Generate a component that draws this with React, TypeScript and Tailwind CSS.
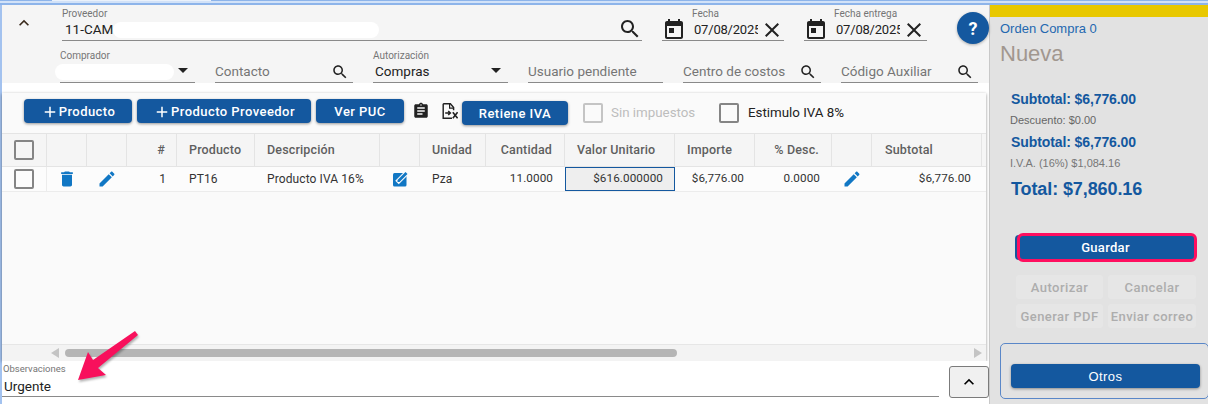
import React from "react";

const P = {
  search: "M15.5 14h-.79l-.28-.27C15.41 12.59 16 11.11 16 9.5 16 5.91 13.09 3 9.5 3S3 5.91 3 9.5 5.91 16 9.5 16c1.61 0 3.09-.59 4.23-1.57l.27.28v.79l5 4.99L20.49 19l-4.99-5zm-6 0C7.01 14 5 11.99 5 9.5S7.01 5 9.5 5 14 7.01 14 9.5 11.99 14 9.5 14z",
  today: "M19 3h-1V1h-2v2H8V1H6v2H5c-1.11 0-1.99.9-1.99 2L3 19c0 1.1.89 2 2 2h14c1.1 0 2-.9 2-2V5c0-1.1-.9-2-2-2zm0 16H5V8h14v11zM7 10h5v5H7z",
  close: "M19 6.41L17.59 5 12 10.59 6.41 5 5 6.41 10.59 12 5 17.59 6.41 19 12 13.41 17.59 19 19 17.59 13.41 12z",
  less: "M12 8l-6 6 1.41 1.41L12 10.83l4.59 4.58L18 14z",
  drop: "M7 10l5 5 5-5z",
  del: "M6 19c0 1.1.9 2 2 2h8c1.1 0 2-.9 2-2V7H6v12zM19 4h-3.5l-1-1h-5l-1 1H5v2h14V4z",
  edit: "M3 17.25V21h3.75L17.81 9.94l-3.75-3.75L3 17.25zM20.71 7.04c.39-.39.39-1.02 0-1.41l-2.34-2.34c-.39-.39-1.02-.39-1.41 0l-1.83 1.83 3.75 3.75 1.83-1.83z",
  add: "M19 13h-6v6h-2v-6H5v-2h6V5h2v6h6v2z",
  clip: "M19 3h-4.18C14.4 1.84 13.3 1 12 1c-1.3 0-2.4.84-2.82 2H5c-1.1 0-2 .9-2 2v14c0 1.1.9 2 2 2h14c1.1 0 2-.9 2-2V5c0-1.1-.9-2-2-2zm-7 0c.55 0 1 .45 1 1s-.45 1-1 1-1-.45-1-1 .45-1 1-1zm2 14H7v-2h7v2zm3-4H7v-2h10v2zm0-4H7V7h10v2z",
};

function Icon({ d, className }: { d: string; className: string }) {
  return (
    <svg viewBox="0 0 24 24" fill="currentColor" className={className}>
      <path d={d} />
    </svg>
  );
}

function Field({
  label,
  value,
  placeholder,
  icon,
  className,
}: {
  label?: string;
  value?: string;
  placeholder?: string;
  icon?: React.ReactNode;
  className: string;
}) {
  return (
    <div className={`relative flex flex-col justify-end border-b border-[#8a8a8a] ${className}`}>
      {label && <span className="absolute left-0 top-[3px] text-[10px] leading-[12px] text-[#757575]">{label}</span>}
      <div className="flex h-[21px] items-center justify-between">
        <span className={`text-[13.5px] ${value ? "text-[#222]" : "text-[#757575]"}`}>{value || placeholder}</span>
        {icon}
      </div>
    </div>
  );
}

function BlueButton({ children, className }: { children: React.ReactNode; className: string }) {
  return (
    <button className={`flex h-6 items-center justify-center rounded-[4px] bg-[#14589f] pt-[1px] text-[13px] font-medium tracking-[0.45px] text-white shadow-[0_1px_3px_rgba(0,0,0,0.4)] ${className}`}>
      {children}
    </button>
  );
}

function Check({ disabled }: { disabled?: boolean }) {
  return <span className={`block h-5 w-5 rounded-[2px] border-2 ${disabled ? "border-[#c4c4c4]" : "border-[#858585]"}`} />;
}

function DateField({ label, className }: { label: string; className: string }) {
  return (
    <div className={`relative flex h-[36px] items-end border-b border-[#8a8a8a] ${className}`}>
      <span className="absolute left-[30px] top-[3px] text-[10px] leading-[12px] text-[#757575]">{label}</span>
      <Icon d={P.today} className="mb-[-2px] h-[24px] w-[24px] shrink-0 text-[#222]" />
      <span className="ml-[8px] w-[64px] overflow-hidden whitespace-nowrap pb-[1px] text-[13px] leading-[18px] tracking-[-0.2px] text-[#222]">07/08/2025</span>
      <Icon d={P.close} className="mb-[-2px] ml-[2px] h-[24px] w-[24px] shrink-0 text-[#222]" />
    </div>
  );
}

function Col({ children, align, className = "" }: { children?: React.ReactNode; align?: string; className?: string }) {
  return <div className={`flex items-center border-r border-[#e4e4e4] ${align || "justify-center"} ${className}`}>{children}</div>;
}

const gridCols = "grid-cols-[45px_40px_40px_50px_78px_125px_40px_66px_79px_110px_80px_77px_40px_110px_1fr]";

function SideDisabled({ children }: { children: React.ReactNode }) {
  return <div className="flex h-6 items-center justify-center rounded-[3px] bg-[#e6e6e6] pt-[1px] font-[Roboto] text-[13px] font-medium tracking-[0.45px] text-[#adadad]">{children}</div>;
}

export default function App() {
  return (
    <div className="relative flex h-[404px] w-[1208px] flex-col overflow-hidden bg-white font-[Roboto,sans-serif] text-[#222]">
      <div className="h-[5px] shrink-0 bg-[#d2e2f8]">
        <div className="flex h-[1px]">
          <span className="w-[52px] bg-[#8db4ea]" />
          <span className="w-[159px] bg-[#eaf1fb]" />
          <span className="flex-1 bg-[#8db4ea]" />
        </div>
        <div className="mt-[2px] h-[2px] bg-[#8db4ea]" />
      </div>
      <div className="flex min-h-0 flex-1">
        <div className="w-[2px] shrink-0 bg-[#a3c2ef]" />
        {/* main */}
        <div className="flex w-[987px] shrink-0 flex-col">
          <div className="relative h-[78px] shrink-0 bg-[#f5f5f5]">
            <div className="flex h-[39px] items-start">
              <Icon d={P.less} className="ml-[12px] mt-[8px] h-[20px] w-[20px] text-[#3a2a1c]" />
              <Field label="Proveedor" value="11-CAM" className="ml-[28px] h-[36px] w-[580px] pl-[3px]"
                icon={<Icon d={P.search} className="mb-[1px] h-[24px] w-[24px] shrink-0 text-[#222]" />} />
              <DateField label="Fecha" className="ml-[20px] w-[122px]" />
              <DateField label="Fecha entrega" className="ml-[20px] w-[123px]" />
              <span className="ml-[30px] mt-[7px] flex h-8 w-8 items-center justify-center rounded-full bg-[#14589f] text-[18px] font-bold text-white shadow-[0_1px_3px_rgba(0,0,0,0.3)]">?</span>
            </div>
            <div className="flex items-start pl-[58px]">
              <div className="relative flex h-[39px] w-[135px] items-end justify-end border-b border-[#8a8a8a]">
                <span className="absolute left-0 top-[6px] text-[10px] leading-[12px] text-[#757575]">Comprador</span>
                <Icon d={P.drop} className="h-[24px] w-[24px] text-[#222]" />
              </div>
              <Field placeholder="Contacto" className="ml-[20px] mt-[2px] h-[37px] w-[138px]" icon={<Icon d={P.search} className="mr-[4px] h-[18px] w-[18px] text-[#222]" />} />
              <div className="relative ml-[20px] flex h-[39px] w-[135px] items-end justify-between border-b border-[#8a8a8a] pl-[2px]">
                <span className="absolute left-0 top-[6px] text-[10px] leading-[12px] text-[#757575]">Autorización</span>
                <span className="pb-[1px] text-[13.5px] leading-[20px] text-[#222]">Compras</span>
                <Icon d={P.drop} className="h-[24px] w-[24px] text-[#222]" />
              </div>
              <Field placeholder="Usuario pendiente" className="ml-[20px] mt-[2px] h-[37px] w-[135px]" />
              <Field placeholder="Centro de costos" className="ml-[20px] mt-[2px] h-[37px] w-[138px]" icon={<Icon d={P.search} className="mr-[4px] h-[18px] w-[18px] text-[#222]" />} />
              <Field placeholder="Código Auxiliar" className="ml-[20px] mt-[2px] h-[37px] w-[137px]" icon={<Icon d={P.search} className="mr-[4px] h-[18px] w-[18px] text-[#222]" />} />
            </div>
            {/* redaction blobs */}
            <span className="absolute left-[111px] top-[17px] h-[16px] w-[266px] rounded-full bg-white" />
            <span className="absolute left-[53px] top-[59px] h-[16px] w-[119px] rounded-full bg-white" />
          </div>
          <div className="h-[10px] shrink-0 bg-white" />
          {/* card */}
          <div className="flex h-[268px] w-[984px] shrink-0 flex-col bg-[#fafafa] shadow-[0_1px_3px_rgba(0,0,0,0.45)]">
            <div className="flex h-[40px] shrink-0 items-start pl-[22px] pt-[6px]">
              <BlueButton className="w-[108px]"><Icon d={P.add} className="h-[18px] w-[18px]" />Producto</BlueButton>
              <BlueButton className="ml-[5px] w-[174px]"><Icon d={P.add} className="h-[18px] w-[18px]" />Producto Proveedor</BlueButton>
              <BlueButton className="ml-[5px] w-[88px]">Ver PUC</BlueButton>
              <Icon d={P.clip} className="ml-[8px] mt-[3px] h-[18px] w-[18px] text-[#222]" />
              <svg viewBox="0 0 20 20" className="ml-[12px] mt-[4px] h-[16px] w-[16px] text-[#222]" fill="none" stroke="currentColor">
                <path d="M1.500 1h9l4 4.500V9M1.500 1v18h11" strokeWidth="1.8" />
                <path d="M9.500 1v5.500h5" strokeWidth="1.500" />
                <path d="M4 12.500h6M7.800 10l2.700 2.500L7.800 15" strokeWidth="1.800" />
                <path d="M13.500 11.500l6 7.500M19.500 11.500l-6 7.500" strokeWidth="2" />
              </svg>
              <BlueButton className="ml-[4px] mt-[2px] w-[106px]">Retiene IVA</BlueButton>
              <span className="ml-[15px] mt-[4px]"><Check disabled /></span>
              <span className="ml-[8px] mt-[4px] w-[108px] text-[13.33px] leading-[20px] text-[#bdbdbd]">Sin impuestos</span>
              <span className="mt-[4px]"><Check /></span>
              <span className="ml-[9px] mt-[4px] text-[13.33px] leading-[20px] text-[#222]">Estimulo IVA 8%</span>
            </div>
            {/* table head */}
            <div className={`grid h-[34px] shrink-0 border-y border-[#e4e4e4] bg-[#f5f5f5] text-[12.5px] font-medium tracking-[0.15px] text-[#5f5f5f] ${gridCols}`}>
              <Col><Check /></Col>
              <Col />
              <Col />
              <Col align="justify-end" className="pr-[11px]">#</Col>
              <Col align="justify-start" className="pl-[12px]">Producto</Col>
              <Col align="justify-start" className="pl-[12px]">Descripción</Col>
              <Col />
              <Col align="justify-start" className="pl-[12px]">Unidad</Col>
              <Col align="justify-end" className="pr-[12px]">Cantidad</Col>
              <Col align="justify-start" className="pl-[12px]">Valor Unitario</Col>
              <Col align="justify-start" className="pl-[12px]">Importe</Col>
              <Col align="justify-end" className="pr-[12px]">% Desc.</Col>
              <Col />
              <Col align="justify-start" className="pl-[13px]">Subtotal</Col>
              <div />
            </div>
            {/* row */}
            <div className={`grid h-[25px] shrink-0 border-b border-[#ececec] bg-[#fcfcfc] text-[12px] tracking-[0.1px] text-[#333] ${gridCols}`}>
              <div className="flex items-center justify-center border-r border-[#ececec]"><Check /></div>
              <div className="flex items-center justify-center"><Icon d={P.del} className="h-[20px] w-[20px] text-[#1177c4]" /></div>
              <div className="flex items-center justify-center"><Icon d={P.edit} className="h-[20px] w-[20px] text-[#1177c4]" /></div>
              <div className="flex items-center justify-end pr-[11px]">1</div>
              <div className="flex items-center pl-[12px]">PT16</div>
              <div className="flex items-center whitespace-nowrap pl-[12px]">Producto IVA 16%</div>
              <div className="flex items-center justify-center pb-[2px]">
                <svg viewBox="0 0 16 17" className="h-[17px] w-[16px]">
                  <rect x="1" y="3" width="13.500" height="13.500" rx="1.500" fill="#1177c4" />
                  <path d="M5 12.500L15 2.500" stroke="#fcfcfc" strokeWidth="5" />
                  <path d="M5.500 10v2h2L15.500 4l-2-2z" fill="#1177c4" />
                </svg>
              </div>
              <div className="flex items-center pl-[12px]">Pza</div>
              <div className="flex items-center justify-end pr-[12px] text-[11.7px]">11.0000</div>
              <div className="flex items-center justify-end border border-[#14589f] bg-[#eeeeee] pr-[11px] text-[11.7px]">$616.000000</div>
              <div className="flex items-center justify-end pr-[11px] text-[11.7px]">$6,776.00</div>
              <div className="flex items-center justify-end pr-[12px] text-[11.7px]">0.0000</div>
              <div className="flex items-center justify-center"><Icon d={P.edit} className="h-[20px] w-[20px] text-[#1177c4]" /></div>
              <div className="flex items-center justify-end pr-[11px] text-[11.7px]">$6,776.00</div>
              <div />
            </div>
            <div className="flex-1" />
            {/* scrollbar */}
            <div className="flex h-[17px] shrink-0 items-center border-t border-[#e6e6e6] bg-[#f3f3f3] pl-[49px] pr-[4px]">
              <span className="h-0 w-0 border-y-[5px] border-r-[8px] border-y-transparent border-r-[#c4c4c4]" />
              <span className="ml-[6px] h-[8px] w-[612px] rounded-full bg-[#b5b5b5]" />
              <span className="ml-auto h-0 w-0 border-y-[5px] border-l-[8px] border-y-transparent border-l-[#c4c4c4]" />
            </div>
          </div>
          {/* observaciones */}
          <div className="flex min-h-0 flex-1 items-start bg-white">
            <div className="relative mt-[1px] h-[35px] w-[937px] border-b border-[#8a8a8a]">
              <span className="absolute left-[1px] top-[1px] text-[9.5px] leading-[12px] text-[#757575]">Observaciones</span>
              <span className="absolute bottom-[0px] left-[2px] text-[13.5px] leading-[20px] text-[#222]">Urgente</span>
            </div>
            <button className="ml-[10px] mt-[5px] flex h-[32px] w-[40px] items-center justify-center rounded-[3px] border border-[#7b7b7b] bg-[#f0f0f0] text-black">
              <Icon d={P.less} className="h-[20px] w-[20px]" />
            </button>
          </div>
        </div>
        {/* sidebar */}
        <div className="flex min-w-0 flex-1 flex-col border-l border-[#c8c8c8] bg-[#e2e2e2] font-['Liberation_Sans',sans-serif]">
          <div className="h-[12px] shrink-0 bg-[#e8c800]" />
          <div className="pl-[10px] pt-[4px] text-[13px] leading-[16px] text-[#2468b0]">Orden Compra 0</div>
          <div className="pl-[10px] pt-[4px] text-[22px] leading-[26px] text-[#a1978f]">Nueva</div>
          <div className="pl-[21px] pt-[24px] text-[14px] font-bold leading-[16px] tracking-[-0.1px] text-[#14589f]">Subtotal: $6,776.00</div>
          <div className="pl-[20px] pt-[7px] text-[11px] leading-[13px] text-[#666]">Descuento: $0.00</div>
          <div className="pl-[21px] pt-[7px] text-[14px] font-bold leading-[16px] tracking-[-0.1px] text-[#14589f]">Subtotal: $6,776.00</div>
          <div className="pl-[20px] pt-[7px] text-[11px] leading-[13px] text-[#777]">I.V.A. (16%) $1,084.16</div>
          <div className="pl-[21px] pt-[8px] text-[18px] font-bold leading-[22px] tracking-[-0.1px] text-[#14589f]">Total: $7,860.16</div>
          <div className="relative ml-[25px] mt-[33px] h-[29px] w-[182px]">
            <div className="absolute bottom-[2px] left-0 top-[2px] w-[12px] rounded-l-[4px] bg-[#14589f]" />
            <button className="absolute inset-y-0 left-[2px] right-0 flex items-center justify-center rounded-[6px] border-[3px] border-[#ff0f5f] bg-[#14589f] pr-[3px] pt-[1px] font-[Roboto] text-[13px] font-medium tracking-[0.3px] text-white">Guardar</button>
          </div>
          <div className="ml-[26px] mt-[13px] grid w-[181px] grid-cols-[87px_88px] gap-x-[5px] gap-y-[5px]">
            <SideDisabled>Autorizar</SideDisabled>
            <SideDisabled>Cancelar</SideDisabled>
            <SideDisabled>Generar PDF</SideDisabled>
            <SideDisabled>Enviar correo</SideDisabled>
          </div>
          <div className="ml-[10px] mt-[15px] h-[56px] w-[209px] rounded-[5px] border border-[#5a87c8] pl-[10px] pt-[20px]">
            <BlueButton className="w-[189px]">Otros</BlueButton>
          </div>
        </div>
      </div>
      {/* annotation arrow over the page */}
      <svg viewBox="0 0 1208 404" className="pointer-events-none absolute left-0 top-0 h-[404px] w-[1208px]">
        <polygon points="78,380 88,352 93,360 135,331 138,335 98,368 106,375" fill="#f8105c" style={{ filter: "drop-shadow(1px 2px 1px rgba(0,0,0,0.3))" }} />
      </svg>
    </div>
  );
}
